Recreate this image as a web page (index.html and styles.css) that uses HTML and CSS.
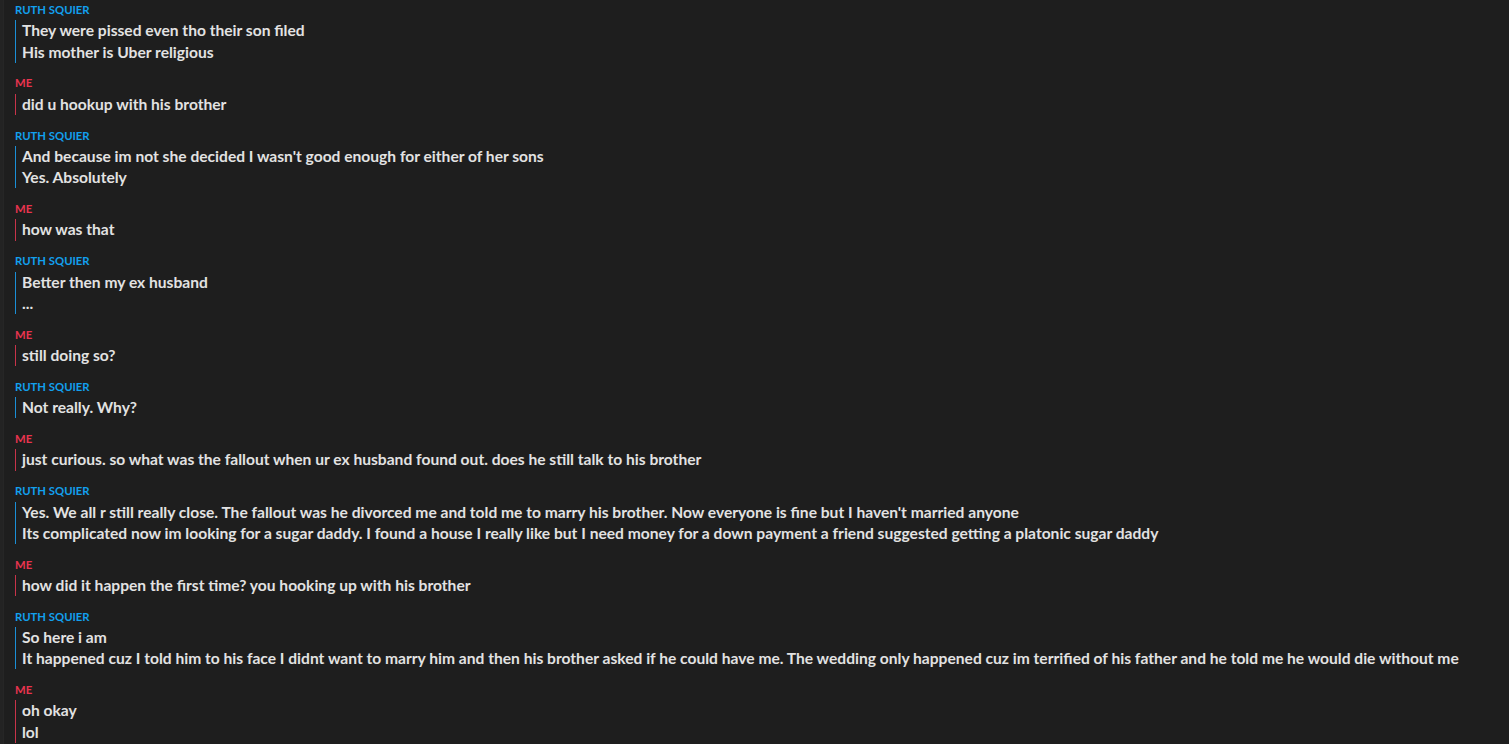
FILE: index.html
```html
<!DOCTYPE html>
<html>
<head>
<meta charset="utf-8">
<link rel="stylesheet" href="styles.css">
</head>
<body>
<div class="rail"></div>
<main class="chat">
  <section class="msg them">
    <div class="name">RUTH SQUIER</div>
    <div class="lines"><p>They were pissed even tho their son filed</p><p>His mother is Uber religious</p></div>
  </section>
  <section class="msg me">
    <div class="name">ME</div>
    <div class="lines"><p>did u hookup with his brother</p></div>
  </section>
  <section class="msg them">
    <div class="name">RUTH SQUIER</div>
    <div class="lines"><p>And because im not she decided I wasn't good enough for either of her sons</p><p>Yes. Absolutely</p></div>
  </section>
  <section class="msg me">
    <div class="name">ME</div>
    <div class="lines"><p>how was that</p></div>
  </section>
  <section class="msg them">
    <div class="name">RUTH SQUIER</div>
    <div class="lines"><p>Better then my ex husband</p><p>...</p></div>
  </section>
  <section class="msg me">
    <div class="name">ME</div>
    <div class="lines"><p>still doing so?</p></div>
  </section>
  <section class="msg them">
    <div class="name">RUTH SQUIER</div>
    <div class="lines"><p>Not really. Why?</p></div>
  </section>
  <section class="msg me">
    <div class="name">ME</div>
    <div class="lines"><p>just curious. so what was the fallout when ur ex husband found out. does he still talk to his brother</p></div>
  </section>
  <section class="msg them">
    <div class="name">RUTH SQUIER</div>
    <div class="lines"><p>Yes. We all r still really close. The fallout was he divorced me and told me to marry his brother. Now everyone is fine but I haven't married anyone</p><p>Its complicated now im looking for a sugar daddy. I found a house I really like but I need money for a down payment a friend suggested getting a platonic sugar daddy</p></div>
  </section>
  <section class="msg me">
    <div class="name">ME</div>
    <div class="lines"><p>how did it happen the first time? you hooking up with his brother</p></div>
  </section>
  <section class="msg them">
    <div class="name">RUTH SQUIER</div>
    <div class="lines"><p>So here i am</p><p>It happened cuz I told him to his face I didnt want to marry him and then his brother asked if he could have me. The wedding only happened cuz im terrified of his father and he told me he would die without me</p></div>
  </section>
  <section class="msg me">
    <div class="name">ME</div>
    <div class="lines"><p>oh okay</p><p>lol</p></div>
  </section>
</main>
</body>
</html>
```
FILE: styles.css
```css
html, body {
  margin: 0;
  padding: 0;
  background: #1e1e1e;
  height: 100%;
  overflow: hidden;
}
body {
  display: flex;
  font-family: Lato, "Noto Sans", sans-serif;
}
.rail {
  width: 3px;
  flex: none;
  background: #232323;
  border-right: 1px solid #262626;
}
.chat {
  padding: 3px 0 0 11px;
  flex: 1;
}
.msg {
  margin-bottom: 13.6px;
}
.name {
  font-size: 11.3px;
  line-height: 14px;
  font-weight: 700;
  margin-bottom: 3.4px;
}
.them .name { color: #12a0ee; }
.me .name { color: #e8344f; }
.lines {
  padding-left: 6px;
  border-left: 1px solid;
}
.them .lines { border-left-color: #1b8fd6; }
.me .lines { border-left-color: #c8344a; }
.lines p {
  margin: 0;
  font-size: 15.6px;
  line-height: 21.2px;
  font-weight: 700;
  color: #e2e2e2;
  white-space: nowrap;
}
```
